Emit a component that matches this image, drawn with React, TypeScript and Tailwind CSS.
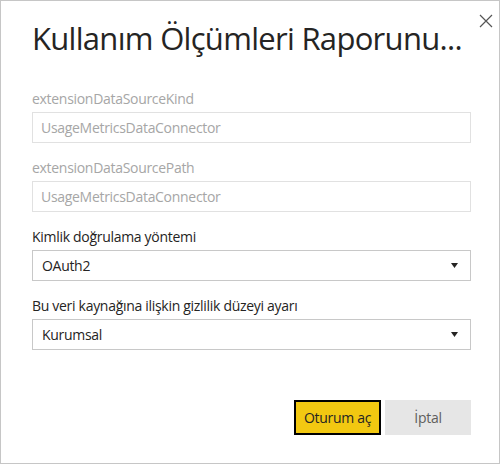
import React from "react";

const font = { fontFamily: '"Open Sans", "Noto Sans", sans-serif' };

function DisabledField({ label, value }: { label: string; value: string }) {
  return (
    <div className="flex flex-col">
      <div className="h-[17px] text-[14px] leading-[17px] tracking-[-0.3px] text-[#a6a6a6]">{label}</div>
      <div className="mt-[5px] flex h-[31px] items-center border border-[#e1e1e1] px-[8px] text-[14px] tracking-[-0.3px] text-[#a6a6a6]">
        {value}
      </div>
    </div>
  );
}

function SelectField({ label, value }: { label: string; value: string }) {
  return (
    <div className="flex flex-col">
      <div className="h-[17px] text-[14px] leading-[17px] tracking-[-0.3px] text-[#252423]">{label}</div>
      <div className="mt-[5px] flex h-[31px] items-center justify-between border border-[#c8c8c8] pl-[9px] pr-[12px] text-[14px] tracking-[-0.3px] text-[#252423]">
        <span>{value}</span>
        <svg width="7" height="5" viewBox="0 0 7 5">
          <path d="M0 0h7L3.5 5z" fill="#252423" />
        </svg>
      </div>
    </div>
  );
}

export default function App() {
  return (
    <div
      className="relative flex h-[464px] w-[500px] flex-col border border-[#c6c6c6] bg-white"
      style={font}
    >
      <button className="absolute right-[5px] top-[12px] flex h-[16px] w-[16px] items-center justify-center">
        <svg width="14" height="14" viewBox="0 0 14 14">
          <path d="M1 1l12 12M13 1L1 13" stroke="#555" strokeWidth="1.2" />
        </svg>
      </button>
      <h1 className="mt-[15px] whitespace-nowrap pl-[31px] text-[31px] font-normal leading-[44px] tracking-[-0.7px] text-[#252423]">
        Kullanım Ölçümleri Raporunu...
      </h1>
      <div className="mt-[30px] flex flex-col gap-[16px] px-[31px] pr-[28px]">
        <DisabledField label="extensionDataSourceKind" value="UsageMetricsDataConnector" />
        <DisabledField label="extensionDataSourcePath" value="UsageMetricsDataConnector" />
        <SelectField label="Kimlik doğrulama yöntemi" value="OAuth2" />
        <SelectField label="Bu veri kaynağına ilişkin gizlilik düzeyi ayarı" value="Kurumsal" />
      </div>
      <div className="mt-[50px] flex justify-end gap-[4px] pr-[28px]">
        <button className="h-[35px] w-[87px] border-2 border-black bg-[#f2c811] text-[14px] tracking-[-0.3px] text-[#252423]">
          Oturum aç
        </button>
        <button className="h-[35px] w-[86px] bg-[#e6e6e6] text-[14px] tracking-[-0.3px] text-[#605e5c]">
          İptal
        </button>
      </div>
    </div>
  );
}
